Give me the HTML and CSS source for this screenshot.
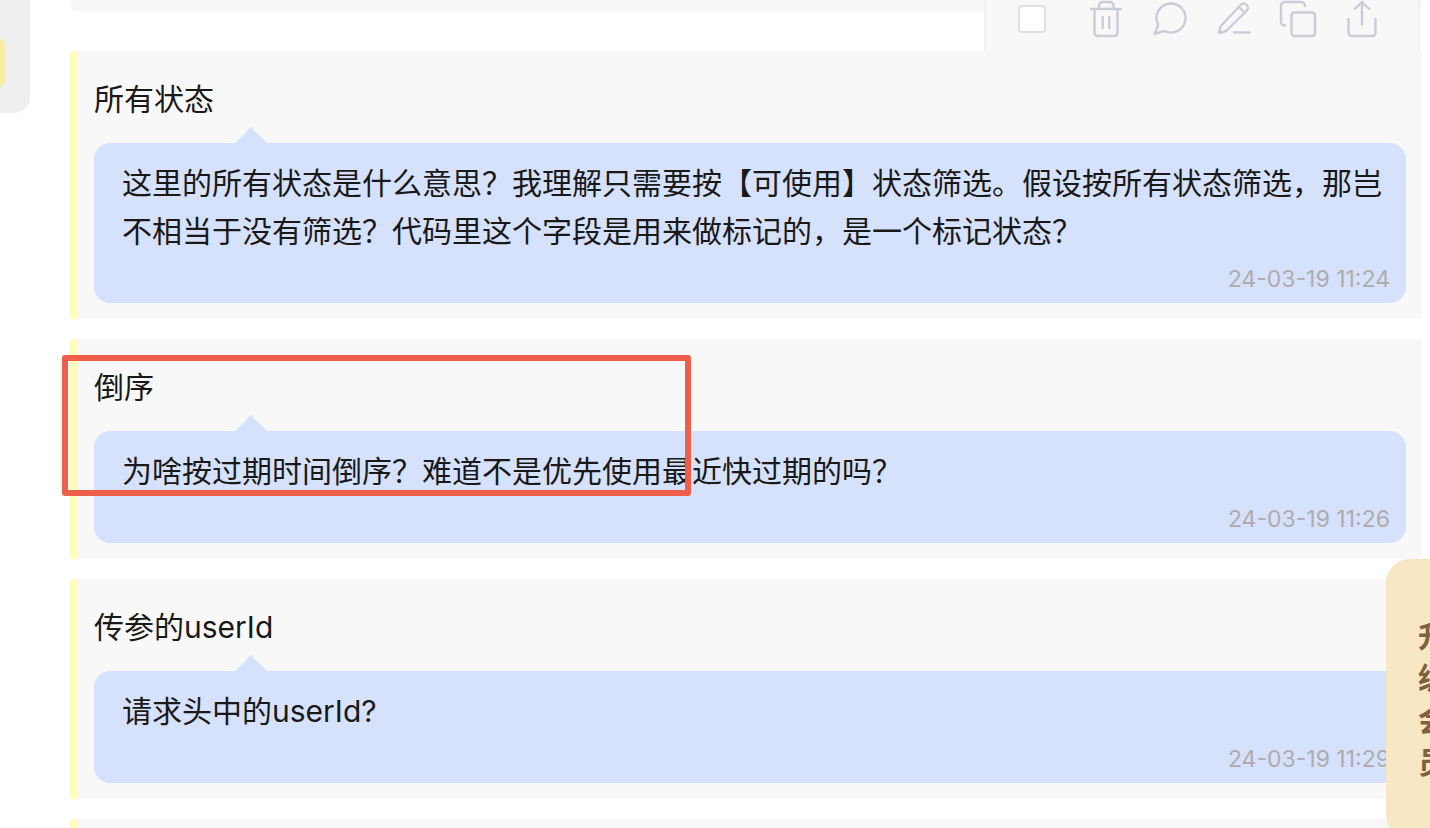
FILE: index.html
```html
<!DOCTYPE html>
<html lang="zh-CN">
<head>
    <meta charset="UTF-8">
    <meta name="viewport" content="width=device-width, initial-scale=1.0">
    <title>批注</title>
    <link rel="stylesheet" href="styles.css">
</head>
<body>
    <aside class="sidebar">
        <span class="sidebar-mark"></span>
    </aside>

    <main class="notes">
        <div class="note-end"></div>

        <article class="note">
            <h2 class="note-title">所有状态</h2>
            <div class="bubble">
                <p class="bubble-text">这里的所有状态是什么意思？我理解只需要按【可使用】状态筛选。假设按所有状态筛选，那岂不相当于没有筛选？代码里这个字段是用来做标记的，是一个标记状态？</p>
                <time class="bubble-time">24-03-19 11:24</time>
            </div>
        </article>

        <article class="note">
            <h2 class="note-title">倒序</h2>
            <div class="bubble">
                <p class="bubble-text">为啥按过期时间倒序？难道不是优先使用最近快过期的吗？</p>
                <time class="bubble-time">24-03-19 11:26</time>
            </div>
            <div class="frame"></div>
        </article>

        <article class="note">
            <h2 class="note-title">传参的userId</h2>
            <div class="bubble">
                <p class="bubble-text">请求头中的userId?</p>
                <time class="bubble-time">24-03-19 11:29</time>
            </div>
        </article>

        <article class="note"></article>
    </main>

    <div class="toolbar">
        <input type="checkbox" class="toolbar-check" aria-label="选择">
        <div class="toolbar-actions">
            <button class="icon-button" aria-label="删除">
                <svg viewBox="0 0 40 40">
                    <path d="M5 9h30M13 9V5.500a3.500 3.500 0 0 1 3.500-3.500h7.500a3.500 3.500 0 0 1 3.500 3.500V9M8.500 9v24a3 3 0 0 0 3 3h17a3 3 0 0 0 3-3V9M16.700 17v11M23.300 17v11"/>
                </svg>
            </button>
            <button class="icon-button" aria-label="评论">
                <svg viewBox="0 0 40 40">
                    <path d="M8 24.500A14.500 14.500 0 1 1 14.500 31C11.500 31.400 8.500 33 4.500 34C5.500 31 8 28 8 24.500z"/>
                </svg>
            </button>
            <button class="icon-button" aria-label="编辑">
                <svg viewBox="0 0 40 40">
                    <path d="M5 33L6.500 26.500L26.500 5Q29.500 2 32.500 4.800Q35.300 7.800 32.500 11L12 31zM25 7l5.500 5.500M20 32.500h15.500"/>
                </svg>
            </button>
            <button class="icon-button" aria-label="复制">
                <svg viewBox="0 0 40 40">
                    <rect x="13.500" y="12.500" width="23.500" height="23.500" rx="3"/>
                    <path d="M7 25.500a4 4 0 0 1-4-4V6a4 4 0 0 1 4-4h16a4 4 0 0 1 4 4"/>
                </svg>
            </button>
            <button class="icon-button" aria-label="分享">
                <svg viewBox="0 0 40 40">
                    <path d="M20 24.500V2M12.700 9L20 2l7.300 7M6.500 19v14a3 3 0 0 0 3 3h21a3 3 0 0 0 3-3V19"/>
                </svg>
            </button>
        </div>
    </div>

    <a href="#" class="member">升级会员</a>
</body>
</html>
```

FILE: styles.css
```css
* {
    box-sizing: border-box;
}
body {
    margin: 0;
    height: 100vh;
    display: flex;
    align-items: flex-start;
    gap: 40px;
    position: relative;
    overflow: hidden;
    background: #fff;
    color: #191919;
    font-family: Inter, "Noto Sans CJK SC", sans-serif;
    font-size: 30px;
    line-height: 48px;
}
.sidebar {
    flex: 0 0 30px;
    padding: 39px 0 26px;
    background: #efefef;
    border-bottom-right-radius: 16px;
}
.sidebar-mark {
    display: block;
    width: 6px;
    height: 48px;
    background: #f6eea6;
    border-radius: 0 6px 6px 0 / 0 12px 12px 0;
}

/* notes */
.notes {
    flex: 1;
    min-width: 0;
    padding-right: 8px;
}
.note-end {
    height: 11px;
    margin-bottom: 40px;
    background: #f7f7f7;
    border-radius: 0 0 8px 8px;
}
.note {
    position: relative;
    margin-bottom: 20px;
    padding: 24px 16px 16px;
    background: #f8f8f8;
    border-left: 8px solid #fdfdb9;
    border-radius: 4px;
}
.note-title {
    margin: 0 0 20px;
    font-size: 30px;
    font-weight: 400;
}
.bubble {
    position: relative;
    display: flex;
    flex-direction: column;
    gap: 12px;
    padding: 16px 16px 12px 28px;
    background: #d6e1fc;
    border-radius: 16px;
}
.bubble::before {
    content: "";
    position: absolute;
    top: -16px;
    left: 141px;
    border: 16px solid transparent;
    border-top-width: 0;
    border-bottom-color: #d6e1fc;
}
.bubble-text {
    margin: 0;
}
.bubble-time {
    align-self: flex-end;
    color: #adadad;
    font-size: 23px;
    line-height: 24px;
}
.frame {
    position: absolute;
    top: 16px;
    left: -16px;
    width: 629px;
    height: 141px;
    border: 6px solid #ee5e4a;
    border-radius: 3px;
}

/* actions over the list */
.toolbar {
    position: absolute;
    top: 0;
    right: 10px;
    display: flex;
    gap: 40px;
    padding: 0 36px 11px 32px;
    background: #f8f8f8;
    border: solid #f1f1f1;
    border-width: 0 2px;
}
.toolbar-check {
    appearance: none;
    width: 28px;
    height: 28px;
    margin: 5px 0 0;
    background: #fff;
    border: 2px solid #dfe0e6;
    border-radius: 4px;
}
.toolbar-actions {
    display: flex;
    gap: 24px;
}
.icon-button {
    width: 40px;
    height: 40px;
    padding: 0;
    background: none;
    border: 0;
    cursor: pointer;
}
.icon-button svg {
    display: block;
    fill: none;
    stroke: #cacdd6;
    stroke-width: 2.4;
    stroke-linecap: round;
    stroke-linejoin: round;
}

.member {
    position: absolute;
    top: 559px;
    right: -50px;
    width: 94px;
    padding: 56px 32px;
    background: #f7e7c4;
    border-radius: 24px;
    color: #80603f;
    font-weight: 700;
    line-height: 42px;
    text-decoration: none;
}
```
